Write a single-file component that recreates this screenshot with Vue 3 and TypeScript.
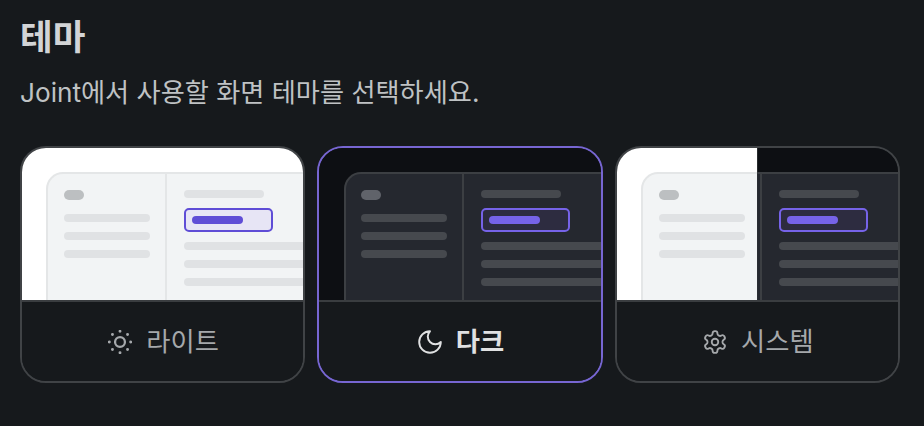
<script setup lang="ts">
type Layer = 'light' | 'dark'
interface Option {
  id: string
  label: string
  layers: Layer[]
  selected: boolean
}
const options: Option[] = [
  { id: 'light', label: '라이트', layers: ['light'], selected: false },
  { id: 'dark', label: '다크', layers: ['dark'], selected: true },
  { id: 'system', label: '시스템', layers: ['light', 'dark'], selected: false },
]
</script>

<template>
  <main class="page">
    <h1 class="title">테마</h1>
    <p class="subtitle">Joint에서 사용할 화면 테마를 선택하세요.</p>
    <div class="cards">
      <button
        v-for="o in options"
        :key="o.id"
        type="button"
        class="card"
        :class="{ selected: o.selected }"
      >
        <div class="preview">
          <div
            v-for="l in o.layers"
            :key="l"
            class="layer"
            :class="[l, { half: o.layers.length > 1 }]"
          >
            <div class="window">
              <div class="side">
                <span class="logo"></span>
                <span class="line side-line"></span>
                <span class="line side-line"></span>
                <span class="line side-line"></span>
              </div>
              <div class="content">
                <span class="line head-line"></span>
                <div class="pick"><span class="pick-bar"></span></div>
                <span class="line body-line"></span>
                <span class="line body-line"></span>
                <span class="line body-line"></span>
              </div>
            </div>
          </div>
        </div>
        <div class="foot">
          <svg v-if="o.id === 'light'" class="icon" viewBox="3 3 18 18" fill="none" stroke="currentColor" stroke-width="1.7" stroke-linecap="round" stroke-linejoin="round">
            <circle cx="12" cy="12" r="3.7" />
            <path stroke-width="2.2" d="M12 4h.01M20 12h.01M12 20h.01M4 12h.01M17.657 6.343h.01M17.657 17.657h.01M6.343 17.657h.01M6.343 6.343h.01" />
          </svg>
          <svg v-else-if="o.id === 'dark'" class="icon" viewBox="2 2 20 20" fill="none" stroke="currentColor" stroke-width="1.6" stroke-linecap="round" stroke-linejoin="round">
            <path d="M12 3a6 6 0 0 0 9 9 9 9 0 1 1-9-9Z" />
          </svg>
          <svg v-else class="icon" viewBox="1 1 22 22" fill="none" stroke="currentColor" stroke-width="1.7" stroke-linecap="round" stroke-linejoin="round">
            <path d="M12.22 2h-.44a2 2 0 0 0-2 2v.18a2 2 0 0 1-1 1.73l-.43.25a2 2 0 0 1-2 0l-.15-.08a2 2 0 0 0-2.73.73l-.22.38a2 2 0 0 0 .73 2.73l.15.1a2 2 0 0 1 1 1.72v.51a2 2 0 0 1-1 1.74l-.15.09a2 2 0 0 0-.73 2.73l.22.38a2 2 0 0 0 2.73.73l.15-.08a2 2 0 0 1 2 0l.43.25a2 2 0 0 1 1 1.73V20a2 2 0 0 0 2 2h.44a2 2 0 0 0 2-2v-.18a2 2 0 0 1 1-1.73l.43-.25a2 2 0 0 1 2 0l.15.08a2 2 0 0 0 2.73-.73l.22-.39a2 2 0 0 0-.73-2.73l-.15-.08a2 2 0 0 1-1-1.74v-.5a2 2 0 0 1 1-1.74l.15-.09a2 2 0 0 0 .73-2.73l-.22-.38a2 2 0 0 0-2.73-.73l-.15.08a2 2 0 0 1-2 0l-.43-.25a2 2 0 0 1-1-1.73V4a2 2 0 0 0-2-2z" />
            <circle cx="12" cy="12" r="3" />
          </svg>
          <span class="label">{{ o.label }}</span>
        </div>
      </button>
    </div>
  </main>
</template>

<style>
html,
body {
  background: #16191c;
}
</style>

<style scoped>
.page {
  box-sizing: border-box;
  width: 924px;
  height: 426px;
  padding: 15px 24px 0 20px;
  background: #16191c;
  font-family: Inter, "Noto Sans CJK KR", sans-serif;
  overflow: hidden;
}
.title {
  margin: 0;
  font-size: 35.5px;
  line-height: 46px;
  font-weight: 700;
  color: #d2d4d6;
}
.subtitle {
  margin: 15px 0 0;
  font-size: 26.2px;
  line-height: 34px;
  font-weight: 400;
  color: #bfc2c4;
}
.cards {
  display: grid;
  grid-template-columns: repeat(3, 1fr);
  gap: 12px;
  margin-top: 36px;
}
.card {
  display: flex;
  flex-direction: column;
  box-sizing: border-box;
  height: 237px;
  padding: 0;
  border: 2px solid #404346;
  border-radius: 26px;
  background: #16191c;
  overflow: hidden;
  font: inherit;
  color: #a5a8ab;
}
.card.selected {
  border-color: #7766d2;
  color: #e0e1e2;
}
.preview {
  display: grid;
  flex: none;
  height: 152px;
  overflow: hidden;
}
.layer {
  grid-area: 1 / 1;
  padding: 24px 0 0 24.3px;
  overflow: hidden;
  min-width: 0;
}
.light {
  background: #ffffff;
  --win: #f2f4f5;
  --edge: #e4e6e7;
  --line: #e0e2e4;
  --logo: #bcbfc1;
  --pick-bg: #e7e5f5;
  --pick: #5f4dd6;
}
.dark {
  background: #0d0f13;
  --win: #25282f;
  --edge: #3c3f43;
  --line: #46494e;
  --logo: #60636a;
  --pick-bg: #2d2c40;
  --pick: #7663e8;
}
.light.half {
  clip-path: inset(0 50% 0 0);
}
.dark.half {
  clip-path: inset(0 0 0 50%);
}
.window {
  display: flex;
  box-sizing: border-box;
  width: 340px;
  height: 128px;
  background: var(--win);
  border: solid var(--edge);
  border-width: 2px 2px 0 2px;
  border-radius: 17px 0 0 0;
}
.side {
  display: flex;
  flex-direction: column;
  align-items: flex-start;
  box-sizing: border-box;
  flex: none;
  width: 118.6px;
  padding: 16px 0 0 15.7px;
  border-right: 2px solid var(--edge);
}
.logo {
  width: 20px;
  height: 10px;
  border-radius: 5px;
  background: var(--logo);
  margin-bottom: 14px;
}
.line {
  display: block;
  height: 8px;
  border-radius: 4px;
  background: var(--line);
}
.side-line {
  width: 86px;
  margin-bottom: 10px;
}
.content {
  display: flex;
  flex-direction: column;
  align-items: flex-start;
  flex: 1;
  padding: 16px 0 0 17.2px;
}
.head-line {
  width: 80px;
  margin-bottom: 10px;
}
.pick {
  box-sizing: border-box;
  display: flex;
  align-items: center;
  width: 89px;
  height: 24px;
  padding-left: 6px;
  margin-bottom: 10px;
  border: 2px solid var(--pick);
  border-radius: 5px;
  background: var(--pick-bg);
}
.pick-bar {
  width: 51px;
  height: 8px;
  border-radius: 4px;
  background: var(--pick);
}
.body-line {
  width: 200px;
  margin-bottom: 10px;
}
.foot {
  flex: 1;
  display: flex;
  align-items: center;
  justify-content: center;
  gap: 14px;
  padding-left: 2px;
  border-top: 2px solid #3a3d40;
  background: #16191c;
}
.card.selected .foot {
  font-weight: 700;
}
.icon {
  width: 24px;
  height: 24px;
  flex: none;
}
.label {
  font-size: 26.3px;
  line-height: 36px;
}
</style>
